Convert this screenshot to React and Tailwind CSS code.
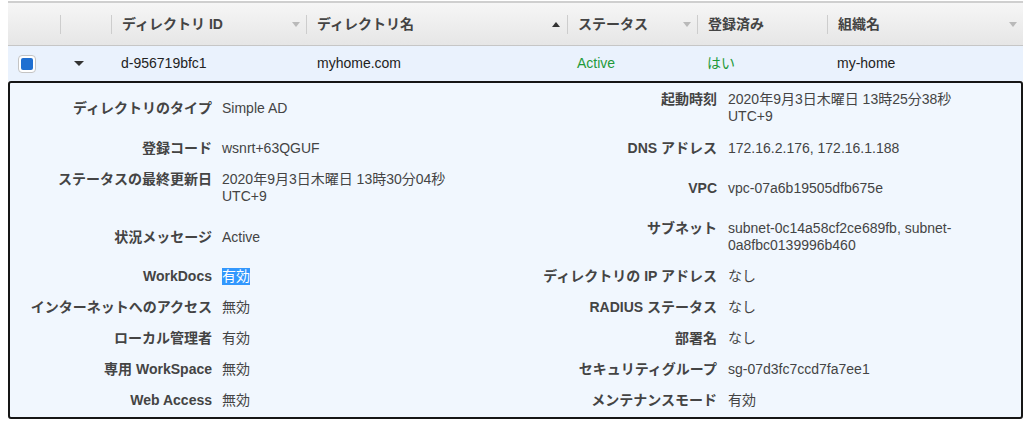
import React from "react";

const columns = [
  { key: "check", width: "w-[52px]", label: "" },
  { key: "expand", width: "w-[51px]", label: "" },
  { key: "id", width: "w-[195px]", label: "ディレクトリ ID", sort: "off" },
  { key: "name", width: "w-[261px]", label: "ディレクトリ名", sort: "asc" },
  { key: "status", width: "w-[130px]", label: "ステータス", sort: "off" },
  { key: "registered", width: "w-[130px]", label: "登録済み" },
  { key: "org", width: "flex-1", label: "組織名", sort: "off" },
];

const details = [
  {
    h: "h-[50px]",
    left: ["ディレクトリのタイプ", "Simple AD"],
    right: ["起動時刻", ["2020年9月3日木曜日 13時25分38秒", "UTC+9"]],
  },
  {
    h: "h-[30px]",
    left: ["登録コード", "wsnrt+63QGUF"],
    right: ["DNS アドレス", "172.16.2.176, 172.16.1.188"],
  },
  {
    h: "h-[50px]",
    left: ["ステータスの最終更新日", ["2020年9月3日木曜日 13時30分04秒", "UTC+9"]],
    right: ["VPC", "vpc-07a6b19505dfb675e"],
  },
  {
    h: "h-[48px]",
    left: ["状況メッセージ", "Active"],
    right: ["サブネット", ["subnet-0c14a58cf2ce689fb, subnet-", "0a8fbc0139996b460"]],
  },
  {
    h: "h-[31px]",
    left: ["WorkDocs", "有効", true],
    right: ["ディレクトリの IP アドレス", "なし"],
  },
  {
    h: "h-[31px]",
    left: ["インターネットへのアクセス", "無効"],
    right: ["RADIUS ステータス", "なし"],
  },
  {
    h: "h-[31px]",
    left: ["ローカル管理者", "有効"],
    right: ["部署名", "なし"],
  },
  {
    h: "h-[31px]",
    left: ["専用 WorkSpace", "無効"],
    right: ["セキュリティグループ", "sg-07d3fc7ccd7fa7ee1"],
  },
  {
    h: "h-[31px]",
    left: ["Web Access", "無効"],
    right: ["メンテナンスモード", "有効"],
  },
];

const SortIcon = ({ sort }) => {
  if (sort === "asc") {
    return (
      <span className="ml-auto mr-[7px] h-0 w-0 border-x-[4px] border-b-[5px] border-x-transparent border-b-[#333]"></span>
    );
  }
  return (
    <span className="ml-auto mr-[6px] h-0 w-0 border-x-[4px] border-t-[5px] border-x-transparent border-t-[#b9b9b9]"></span>
  );
};

const HeaderCell = ({ col, index }) => {
  return (
    <div className={`${col.width} flex h-full items-center`}>
      {index > 0 && <div className="h-[19px] w-px bg-[#cdcdcd]"></div>}
      {col.label && (
        <span className="pl-[10px] text-[14px] font-bold leading-[17px] text-[#444]">
          {col.label}
        </span>
      )}
      {col.sort && <SortIcon sort={col.sort} />}
    </div>
  );
};

const Value = ({ value, selected }) => {
  if (Array.isArray(value)) {
    return (
      <>
        {value[0]}
        <br />
        {value[1]}
      </>
    );
  }
  if (selected) {
    return (
      <span className="inline-block h-[17px] bg-[#3297fd] leading-[17px] text-white">
        {value}
      </span>
    );
  }
  return value;
};

const Pair = ({ pair, h, rightSide }) => {
  const [label, value, selected] = pair;
  const multi = Array.isArray(value);
  const pad = h === "h-[48px]" ? "pt-[7px]" : "pt-[8px]";
  return (
    <>
      <div
        className={`${rightSide ? "pr-[11px]" : "pr-[10px]"} text-right font-bold text-[#444] ${
          multi ? `self-start ${pad}` : ""
        }`}
      >
        {label}
      </div>
      <div className="text-[#444]">
        <Value value={value} selected={selected} />
      </div>
    </>
  );
};

const App = () => {
  return (
    <div className="min-h-[427px] bg-white pt-px font-['Liberation_Sans','Noto_Sans_CJK_JP',sans-serif]">
      <div className="ml-[8px] w-[1015px]">
        {/* table header */}
        <div className="flex h-[45px] border-t-2 border-b border-t-[#cfcfcf] border-b-[#c6c6c6] bg-linear-to-b from-[#f6f6f6] to-[#e6e6e6]">
          {columns.map((col, i) => (
            <HeaderCell key={col.key} col={col} index={i} />
          ))}
        </div>

        {/* selected row */}
        <div className="flex h-[35px] items-center bg-[#eaf2fd] text-[14px] leading-[17px] text-[#222]">
          <div className="w-[52px] pl-[10px]">
            <div className="h-[18px] w-[18px] rounded-[4px] border border-[#c4c4c4] bg-white p-[2px]">
              <div className="h-full w-full rounded-[2px] bg-[#1f6fd1]"></div>
            </div>
          </div>
          <div className="w-[51px] pl-[14px]">
            <div className="h-0 w-0 border-x-[5.5px] border-t-[5px] border-x-transparent border-t-[#333]"></div>
          </div>
          <div className="w-[195px] pl-[10px]">d-956719bfc1</div>
          <div className="w-[261px] pl-[11px]">myhome.com</div>
          <div className="w-[130px] pl-[10px] text-[#1f9a3a]">Active</div>
          <div className="w-[130px] pl-[10px] text-[#1f9a3a]">はい</div>
          <div className="flex-1 pl-[10px]">my-home</div>
        </div>

        {/* detail panel */}
        <div className="rounded-[3px] border-2 border-[#161616] bg-[#f1f7fe] pb-px">
          <div className="grid grid-cols-[212px_298px_208px_1fr] items-center text-[14px] leading-[17px]">
            {details.map((row, i) => (
              <div key={i} className={`${row.h} col-span-4 grid grid-cols-subgrid items-center`}>
                <Pair pair={row.left} h={row.h} />
                <Pair pair={row.right} h={row.h} rightSide />
              </div>
            ))}
          </div>
        </div>
      </div>
    </div>
  );
};

export default App;
